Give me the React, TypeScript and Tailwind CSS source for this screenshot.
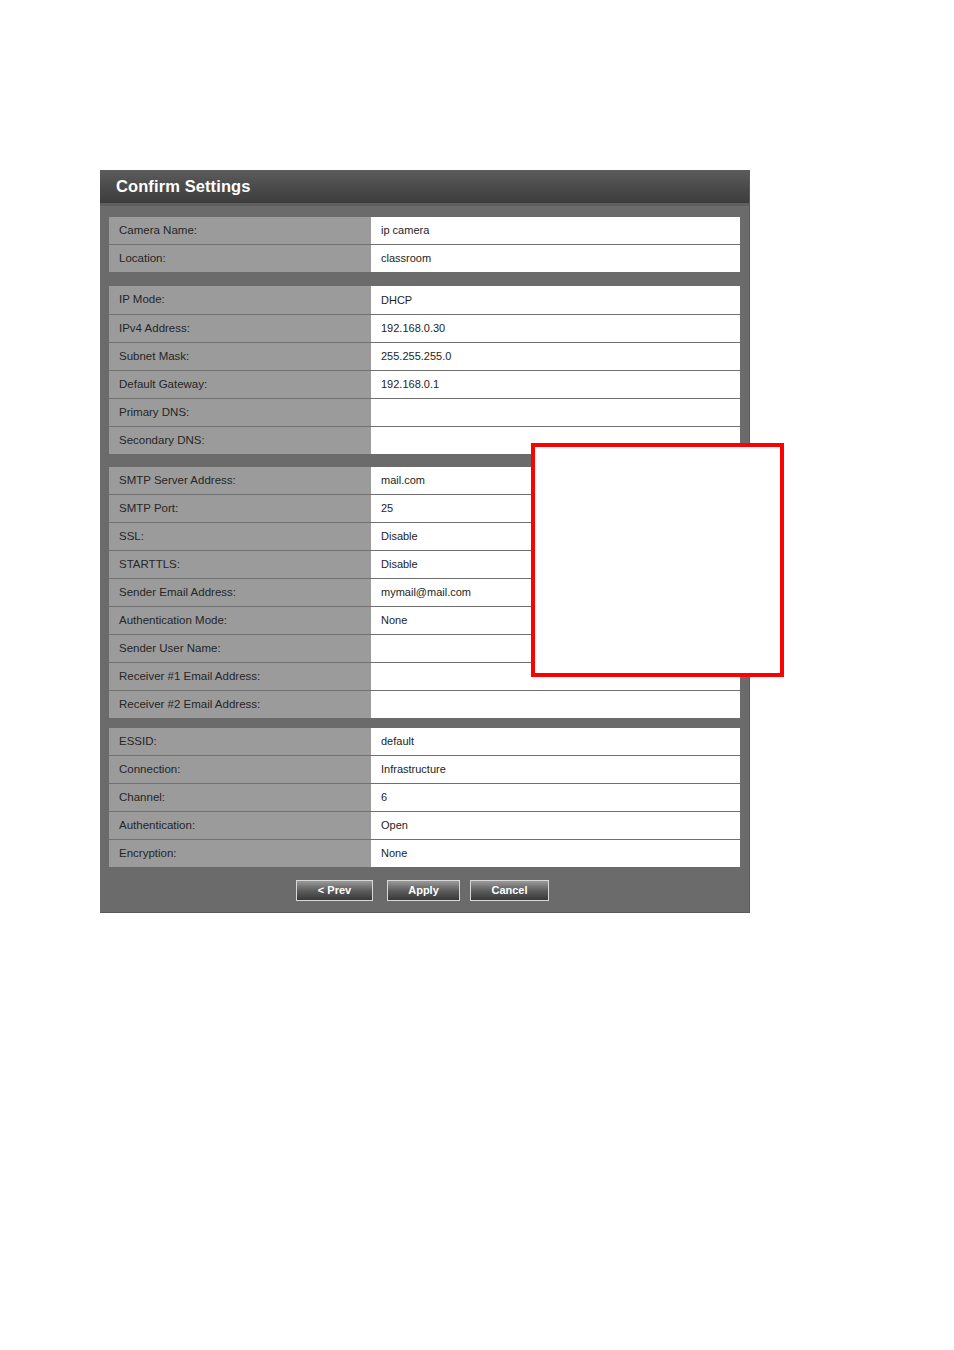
import React from "react";

type Row = [string, string];

const sections: Row[][] = [
  [
    ["Camera Name:", "ip camera"],
    ["Location:", "classroom"],
  ],
  [
    ["IP Mode:", "DHCP"],
    ["IPv4 Address:", "192.168.0.30"],
    ["Subnet Mask:", "255.255.255.0"],
    ["Default Gateway:", "192.168.0.1"],
    ["Primary DNS:", ""],
    ["Secondary DNS:", ""],
  ],
  [
    ["SMTP Server Address:", "mail.com"],
    ["SMTP Port:", "25"],
    ["SSL:", "Disable"],
    ["STARTTLS:", "Disable"],
    ["Sender Email Address:", "mymail@mail.com"],
    ["Authentication Mode:", "None"],
    ["Sender User Name:", ""],
    ["Receiver #1 Email Address:", ""],
    ["Receiver #2 Email Address:", ""],
  ],
  [
    ["ESSID:", "default"],
    ["Connection:", "Infrastructure"],
    ["Channel:", "6"],
    ["Authentication:", "Open"],
    ["Encryption:", "None"],
  ],
];

const font = { fontFamily: '"Liberation Sans", Arial, sans-serif' };

function Section({ rows, tallFirst }: { rows: Row[]; tallFirst?: boolean }) {
  return (
    <div className="flex flex-col">
      {rows.map(([label, value], i) => {
        const last = i === rows.length - 1;
        const h =
          tallFirst && i === 0
            ? "h-[32px] pt-[3px] border-b border-[#707070]"
            : last
            ? "h-[27px]"
            : "h-[28px] border-b border-[#707070]";
        return (
          <div key={label} className={`flex ${h}`}>
            <div className="w-[262px] shrink-0 bg-[#9b9b9b] flex items-center pl-[10px] text-[11.5px] text-[#262626]">
              {label}
            </div>
            <div className="flex-1 bg-white flex items-center pl-[10px] text-[11px] text-[#1e1e1e]">
              {value}
            </div>
          </div>
        );
      })}
    </div>
  );
}

function Btn({ label, w, ml }: { label: string; w: string; ml: string }) {
  return (
    <button
      className={`${w} ${ml} h-[21px] border border-[#d8d8d8] bg-gradient-to-b from-[#9a9a9a] via-[#5e5e5e] to-[#383838] text-white text-[11px] font-bold flex items-center justify-center`}
      style={font}
    >
      {label}
    </button>
  );
}

export default function App() {
  return (
    <div className="relative w-[954px] h-[1350px] bg-white" style={font}>
      <div className="pt-[170px] pl-[100px]">
        <div className="w-[650px] h-[743px] bg-[#6b6b6b] border-r border-b border-[#5a5a5a]">
          <div className="h-[36px] bg-gradient-to-b from-[#5c5c5c] via-[#4b4b4b] to-[#3d3d3d] flex items-center pl-[16px] border-b-[3px] border-[#5f5f5f]">
            <span className="text-white font-bold text-[16.5px] tracking-[0.1px]">Confirm Settings</span>
          </div>
          <div className="pl-[9px] pr-[9px] pt-[11px] flex flex-col">
            <Section rows={sections[0]} />
            <div className="h-[11px]" />
            <Section rows={sections[1]} tallFirst />
            <div className="h-[13px]" />
            <Section rows={sections[2]} />
            <div className="h-[10px]" />
            <Section rows={sections[3]} />
            <div className="flex pt-[13px] pl-[187px]">
              <Btn label="< Prev" w="w-[77px]" ml="ml-0" />
              <Btn label="Apply" w="w-[73px]" ml="ml-[14px]" />
              <Btn label="Cancel" w="w-[79px]" ml="ml-[10px]" />
            </div>
          </div>
        </div>
      </div>
      <div className="absolute left-[531px] top-[443px] w-[253px] h-[234px] border-4 border-[#ff0000] bg-white" />
    </div>
  );
}
